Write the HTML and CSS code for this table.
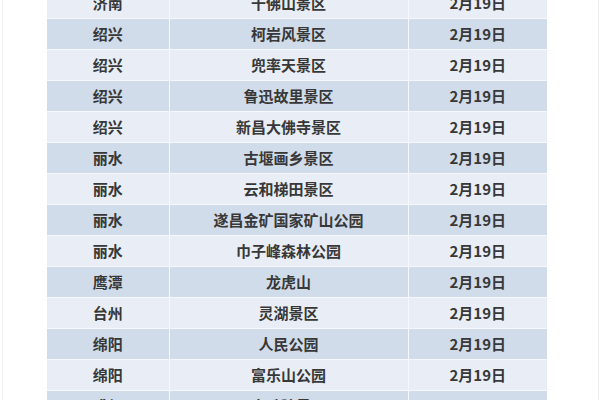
FILE: index.html
```html
<!DOCTYPE html>
<html lang="zh-CN">
<head>
<meta charset="utf-8">
<title>景区表</title>
<link rel="stylesheet" href="styles.css">
</head>
<body>
<div class="frame">
  <table class="sched">
    <colgroup>
      <col class="c-city">
      <col class="c-spot">
      <col class="c-date">
    </colgroup>
    <tbody>
      <tr class="odd"><td>济南</td><td>千佛山景区</td><td>2月19日</td></tr>
      <tr class="even"><td>绍兴</td><td>柯岩风景区</td><td>2月19日</td></tr>
      <tr class="odd"><td>绍兴</td><td>兜率天景区</td><td>2月19日</td></tr>
      <tr class="even"><td>绍兴</td><td>鲁迅故里景区</td><td>2月19日</td></tr>
      <tr class="odd"><td>绍兴</td><td>新昌大佛寺景区</td><td>2月19日</td></tr>
      <tr class="even"><td>丽水</td><td>古堰画乡景区</td><td>2月19日</td></tr>
      <tr class="odd"><td>丽水</td><td>云和梯田景区</td><td>2月19日</td></tr>
      <tr class="even"><td>丽水</td><td>遂昌金矿国家矿山公园</td><td>2月19日</td></tr>
      <tr class="odd"><td>丽水</td><td>巾子峰森林公园</td><td>2月19日</td></tr>
      <tr class="even"><td>鹰潭</td><td>龙虎山</td><td>2月19日</td></tr>
      <tr class="odd"><td>台州</td><td>灵湖景区</td><td>2月19日</td></tr>
      <tr class="even"><td>绵阳</td><td>人民公园</td><td>2月19日</td></tr>
      <tr class="odd"><td>绵阳</td><td>富乐山公园</td><td>2月19日</td></tr>
      <tr class="even"><td>成都</td><td>文殊院景区</td><td>2月19日</td></tr>
    </tbody>
  </table>
</div>
</body>
</html>
```

FILE: styles.css
```css
html, body {
  margin: 0;
  padding: 0;
  background: #ffffff;
}
.frame {
  width: 600px;
  height: 400px;
  overflow: hidden;
  box-sizing: border-box;
  padding-left: 47px;
  border-left: 1px solid #f1f1f1;
  border-right: 1px solid #eeeeee;
  margin-left: 2px;
  width: 597px;
}
.sched {
  border-collapse: collapse;
  width: 500px;
  margin-top: -12px;
  margin-left: -3px;
  table-layout: fixed;
  font-family: "Noto Sans CJK SC", "Noto Sans", sans-serif;
  font-size: 15px;
  font-weight: 700;
  color: #383838;
}
.c-city { width: 122px; }
.c-spot { width: 239px; }
.c-date { width: 139px; }
.sched td {
  height: 30px;
  padding: 0;
  text-align: center;
  vertical-align: middle;
  line-height: 30px;
  border: 1px solid #f6f8fb;
  border-top: 0;
}
.sched td:first-child { border-left: 0; }
.sched td:last-child { border-right: 0; }
.odd td { background: #e9eef6; }
.even td { background: #d1dcea; }
```
